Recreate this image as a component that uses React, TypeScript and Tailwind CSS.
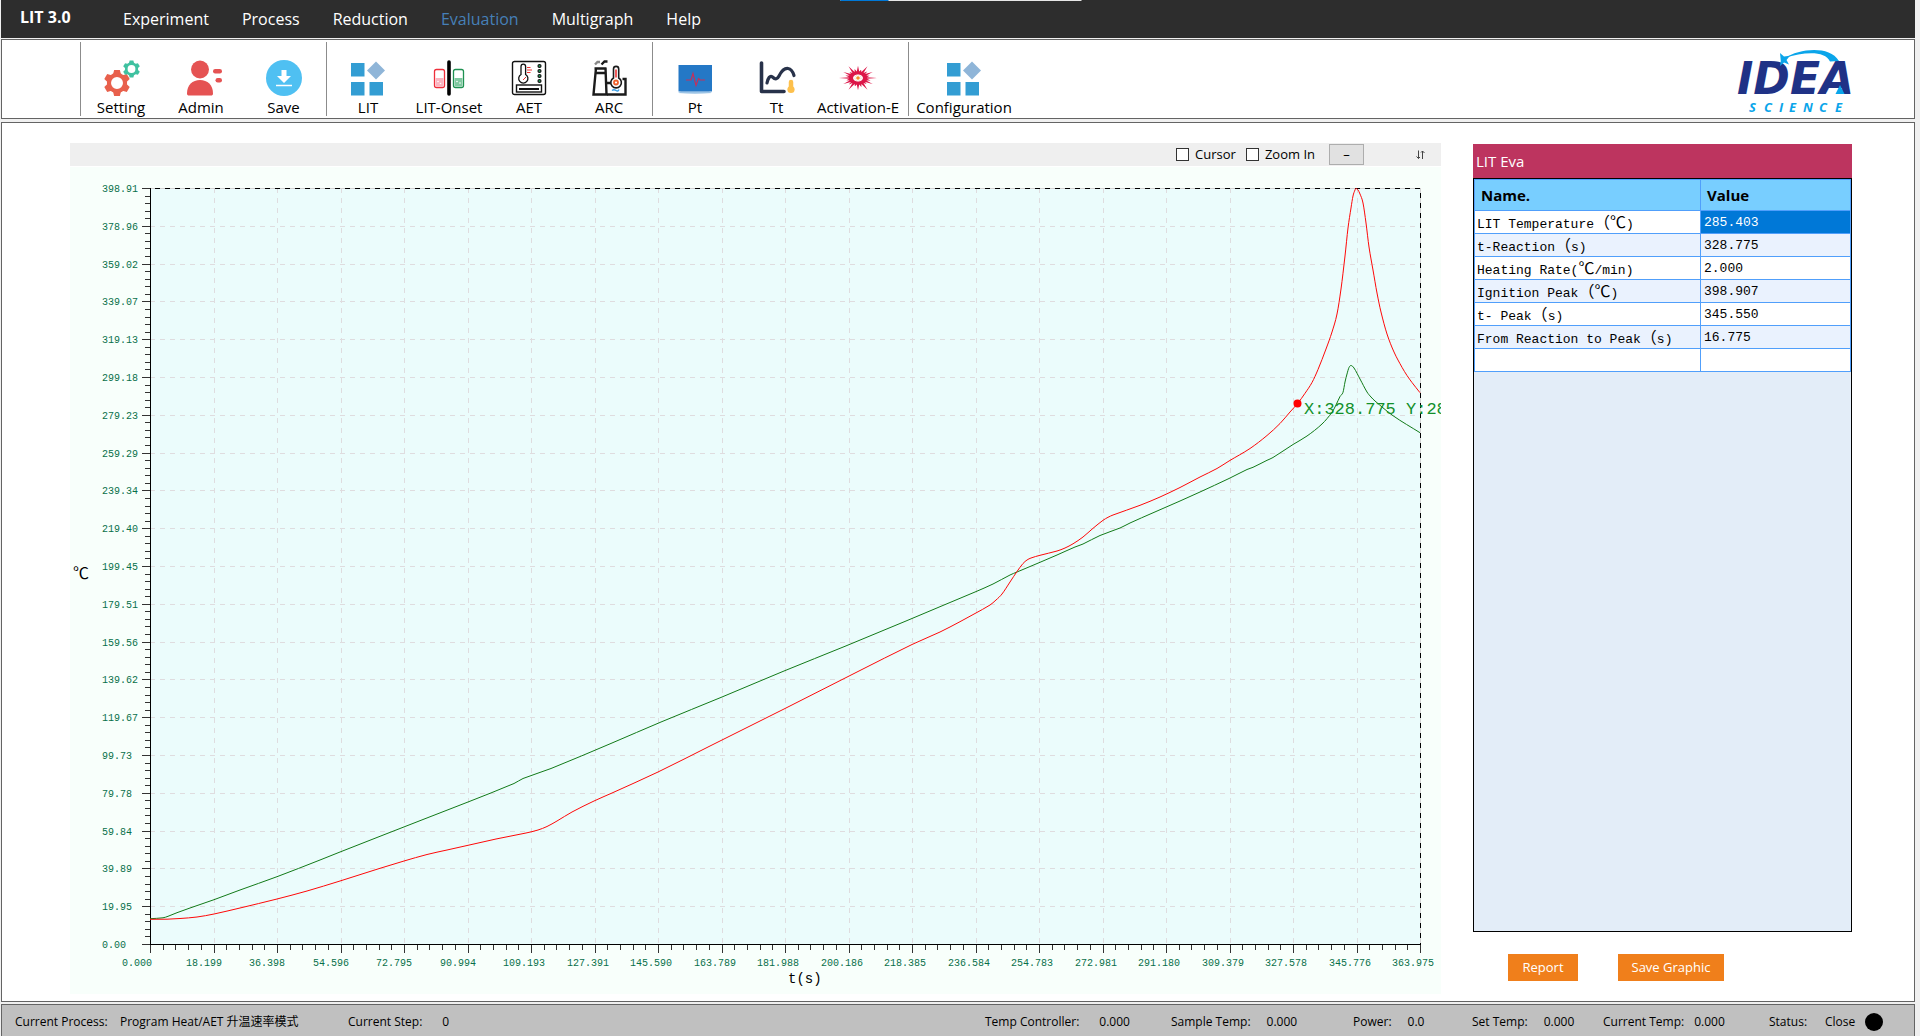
import React, { useState } from 'react';
import clsx from 'clsx';

const MENU = ['Experiment', 'Process', 'Reduction', 'Evaluation', 'Multigraph', 'Help'];

const RESULTS = [
  { name: 'LIT Temperature（℃)', value: '285.403' },
  { name: 't-Reaction（s)', value: '328.775' },
  { name: 'Heating Rate(℃/min)', value: '2.000' },
  { name: 'Ignition Peak（℃)', value: '398.907' },
  { name: 't- Peak（s)', value: '345.550' },
  { name: 'From Reaction to Peak（s)', value: '16.775' },
  { name: '', value: '' },
];

const STATUS = [
  { label: 'Temp Controller:', value: '0.000', layout: 'w-[186px] gap-5' },
  { label: 'Sample Temp:', value: '0.000', layout: 'w-[182px] gap-4' },
  { label: 'Power:', value: '0.0', layout: 'w-[119px] gap-4' },
  { label: 'Set Temp:', value: '0.000', layout: 'w-[131px] gap-4' },
  { label: 'Current Temp:', value: '0.000', layout: 'w-[166px] gap-2.5' },
];

/* ---------- toolbar icons ---------- */

const ICON = 'w-9 h-9 shrink-0 overflow-visible';

const Gear: React.FC<{ cx: number; cy: number; r: number; color: string }> = ({ cx, cy, r, color }) => (
  <g transform={`translate(${cx} ${cy})`}>
    {[0, 60, 120, 180, 240, 300].map(a => (
      <path key={a} transform={`rotate(${a})`} fill={color} d={`M${-r * 0.32} ${-r * 0.6}L${-r * 0.22} ${-r}H${r * 0.22}L${r * 0.32} ${-r * 0.6}z`} />
    ))}
    <circle r={r * 0.62} fill="none" stroke={color} strokeWidth={r * 0.32} />
  </g>
);

const SettingIcon = () => (
  <svg viewBox="-2 0 36 36" className={ICON}>
    <Gear cx={12} cy={23} r={13} color="#e8604c" />
    <Gear cx={26.5} cy={9} r={8.5} color="#3fc1a0" />
  </svg>
);

const AdminIcon = () => (
  <svg viewBox="-4 0 36 36" className={ICON} fill="#e55353">
    <circle cx="13" cy="9.500" r="9" />
    <path d="M0 33.500C0 25 5.500 20 13 20s13 5 13 13.500c0 1.500-.8 2-2 2H2c-1.200 0-2-.5-2-2z" />
    <rect x="26" y="9" width="9" height="4.500" rx="2.200" />
    <rect x="28.500" y="18" width="6.500" height="4.500" rx="2.200" />
  </svg>
);

const SaveIcon = () => (
  <svg viewBox="0 0 36 36" className={ICON}>
    <circle cx="18" cy="18" r="18" fill="#4fc0f2" />
    <path d="M15.500 10h5v6H25l-7 7-7-7h4.500z" fill="#fff" />
    <path d="M10 25.500h16" stroke="#fff" strokeWidth="1.500" />
  </svg>
);

const TilesIcon = () => (
  <svg viewBox="0 0 36 36" className={ICON} fill="#339dd3">
    <rect x="1" y="3" width="13.500" height="13.500" />
    <rect x="1" y="22" width="13.500" height="13.500" />
    <rect x="19.500" y="22" width="13.500" height="13.500" />
    <path d="M26 1.500l9 9-9 9-9-9z" fill="#8fb5d8" />
  </svg>
);

const OnsetIcon = () => (
  <svg viewBox="0 0 36 36" className={ICON}>
    <rect x="3.500" y="9.500" width="10" height="18" rx="2" fill="#fff" stroke="#ee2f3b" strokeWidth="1.300" />
    <path d="M4.500 18h8v8.500h-8z" fill="#fbb4c0" />
    <circle cx="7" cy="21.500" r="0.800" fill="#fff" />
    <circle cx="9.500" cy="23.500" r="0.800" fill="#fff" />
    <path d="M18 2v32" stroke="#000" strokeWidth="3.600" strokeLinecap="round" />
    <rect x="22.500" y="9.500" width="10" height="18" rx="2" fill="#fff" stroke="#1f9152" strokeWidth="1.300" />
    <path d="M23.500 18h8v8.500h-8z" fill="#80c8a0" />
    <circle cx="26" cy="21.500" r="0.800" fill="#fff" />
    <circle cx="29" cy="23" r="0.800" fill="#fff" />
  </svg>
);

const AetIcon = () => (
  <svg viewBox="0 0 36 36" className={ICON} fill="none" stroke="#111">
    <rect x="1.500" y="1.500" width="33" height="33" rx="2" strokeWidth="1.400" />
    <path d="M10 14.500V6.500a2.300 2.300 0 0 1 4.600 0v8a4.600 4.600 0 1 1-4.600 0z" strokeWidth="1.300" />
    <path d="M16 7.500h3.500M16 10h5M16 12.500h3.500M12 20l3-3" stroke="#e33" strokeWidth="1" />
    {[6, 11, 16, 21].map(y => (
      <circle key={y} cx="28.500" cy={y} r="1.500" fill="#1f9152" strokeWidth="1.200" />
    ))}
    <rect x="5.500" y="25" width="25" height="7" strokeWidth="1.400" />
    <path d="M8 29h20" strokeWidth="2" />
  </svg>
);

const ArcIcon = () => (
  <svg viewBox="0 0 36 36" className={ICON} fill="none" stroke="#1b1b1b" strokeWidth="2">
    <path d="M4 4.500l2.500-2.500H9" stroke="#888" strokeWidth="2.400" />
    <path d="M10.500 4.500l3-3h3" strokeWidth="2.400" />
    <path d="M3.500 8.500h12M4.500 13h10.500M5 8L2.500 34.500h13L14.500 8" strokeWidth="2.400" />
    <path d="M16 34.500h18.500V19h-3M16 23h4" strokeWidth="2.400" />
    <path d="M22.500 18V9a2.600 2.600 0 0 1 5.200 0v9a5.300 5.300 0 1 1-5.200 0z" fill="#fff" strokeWidth="1.600" />
    <path d="M25 9.500v8" stroke="#e33" strokeWidth="1.600" />
    <circle cx="25" cy="22.500" r="2" stroke="#f0622d" strokeWidth="1.800" />
    <path d="M21 30.500q2-1.500 4 0t3-1" stroke="#3aa0e8" strokeWidth="1.400" />
  </svg>
);

const PtIcon = () => (
  <svg viewBox="0 0 36 36" className={ICON}>
    <path d="M1 33l3-1.500h28l3 1.500q-17 1.500-34 0z" fill="#9cc4e6" />
    <rect x="1.500" y="5" width="33.500" height="26.500" fill="#2478c6" />
    <path d="M9 20h5l2-6.500 3 12 2.500-7 1.500 1.500h5" fill="none" stroke="#c4305c" strokeWidth="1.200" />
  </svg>
);

const TtIcon = () => (
  <svg viewBox="0 0 36 36" className={ICON} fill="none" stroke="#28324a" strokeLinecap="round" strokeLinejoin="round">
    <path d="M2.500 3v28.500H25" strokeWidth="3.600" />
    <path d="M8 23c1-5 3-8 5.500-6 3 3 5 2 6.500-1 2-4 4.500-8 9-7.500 3.500.5 5 3.500 6 7" strokeWidth="3.200" />
    <path d="M32 22v5" stroke="#fdc04c" strokeWidth="4.500" />
    <circle cx="32" cy="29.500" r="3.600" fill="#fdc04c" stroke="none" />
  </svg>
);

// alternating long and short rays, flattened vertically
const BURST = Array.from({ length: 48 }, (_, i) => {
  const r = i % 2 ? 9 : [19, 13, 17, 12][(i / 2) % 4];
  const a = (i / 48) * Math.PI * 2;
  return `${(18 + r * Math.cos(a)).toFixed(1)},${(18 + r * 0.72 * Math.sin(a)).toFixed(1)}`;
}).join(' ');

const BurstIcon = () => (
  <svg viewBox="0 0 36 36" className={ICON}>
    <polygon points={BURST} fill="#dc1648" />
    <ellipse cx="18" cy="18" rx="5" ry="3.500" fill="#fff" />
    <circle cx="18" cy="18" r="3" fill="none" stroke="#f7c9b0" strokeWidth="1" strokeDasharray="1 1" />
    <circle cx="18" cy="18" r="1.800" fill="#f5902c" />
  </svg>
);

const TOOL_GROUPS = [
  {
    pad: '',
    tools: [
      { label: 'Setting', icon: SettingIcon, width: 'w-20' },
      { label: 'Admin', icon: AdminIcon, width: 'w-20' },
      { label: 'Save', icon: SaveIcon, width: 'w-[85px]' },
    ],
  },
  {
    pad: 'pr-[3px]',
    tools: [
      { label: 'LIT', icon: TilesIcon, width: 'w-[82px]' },
      { label: 'LIT-Onset', icon: OnsetIcon, width: 'w-20' },
      { label: 'AET', icon: AetIcon, width: 'w-20' },
      { label: 'ARC', icon: ArcIcon, width: 'w-20' },
    ],
  },
  {
    pad: 'pr-2',
    tools: [
      { label: 'Pt', icon: PtIcon, width: 'w-[84px]' },
      { label: 'Tt', icon: TtIcon, width: 'w-[79px]' },
      { label: 'Activation-E', icon: BurstIcon, width: 'w-[84px]' },
    ],
  },
  {
    pad: '',
    tools: [{ label: 'Configuration', icon: TilesIcon, width: 'w-[110px]' }],
  },
];

const Logo = () => (
  <svg viewBox="0 0 120 64" className="w-[120px] h-16 overflow-visible" role="img" aria-label="IDEA Science">
    <text x="0" y="43" fill="#1f3286" className="font-['DejaVu_Sans',sans-serif] text-[44px] font-bold italic">IDEA</text>
    <path d="M48 7C62-2 92-6 102 10l-9 .5C88-1 66 1 48 7z" fill="#0aa5ea" />
    <path d="M43 2l4 3.500 6-.8-3.500 4.300 2.500 4.500-5-2-4 3.500.8-5z" fill="#0aa5ea" />
    <path d="M103 34l4.500 9h-9z" fill="#0aa5ea" />
    <text x="12 27 42 52 66 82 98" y="61" fill="#0aa5ea" className="font-['Open_Sans',sans-serif] text-[13px] font-bold italic">SCIENCE</text>
  </svg>
);

/* ---------- chart ---------- */

const LEFT = 150;
const RIGHT = 1420;
const TOP = 188;
const BOTTOM = 944;
const X_MAX = 363.975;
const Y_MAX = 398.907;
const DIVISIONS = 20;

const SAMPLE_CURVE =
  '150,919.3 167,919.2 180,918.5 197,917 214,914 240,908 277,899 307,891 340,881 380,868.3 404,861 427,854.5 447,850 468,845.3 496,839 526,833 538,830 547,826.5 557,821 572,812 594,801 612,793 658,772 710,746 784,709 857,672 912,644.5 940,632 960,621.7 975,613.5 990,605 996,600 1002,594 1010,582 1017,571.5 1023,563.5 1027,560 1031,558 1040,555.3 1057,551 1065,548 1073,543.8 1083,537 1093,528.3 1103,520.3 1108,517.3 1113,515 1140,505.3 1160,497 1180,487.5 1200,477 1217,468.5 1229,461 1250,448.5 1267,435.5 1280,423.5 1290,412 1298,403 1305,393.3 1312,382.5 1318,369.5 1326,349 1332,332 1337,314 1341,289 1345,256 1348,228 1351,208 1353,196 1355,190 1356,188.5 1358,190 1360,194 1363,203 1366,223 1369,247 1373,270 1377,293 1381,312 1387,334 1394,352 1402,367.3 1407,375.5 1412,382.5 1420,392.7';

const REFERENCE_CURVE =
  '150,918.7 163,917.8 168,916.3 177,912.7 190,908 214,899.7 240,890 277,876.7 320,860 340,852 380,836.3 423,819.5 468,802 514,783.5 523,778.5 551,768.5 612,743 661,722 722,697 784,671 845,646.3 906,621 940,606.7 975,592 993,584 1010,575 1017,572 1040,562.3 1057,555 1075,547 1083,544 1100,535.5 1120,528 1130,523 1153,512.8 1180,501 1200,492 1229,478.5 1247,469.5 1253,467.3 1267,460.3 1273,457.5 1293,444.5 1307,436 1322,424 1332,412.3 1336,405 1340,396.5 1343,392.3 1345,382 1347,374 1349,367.5 1351,365.5 1354,368 1360,379 1367,392 1371,397 1375,401 1393,415.7 1420,432.7';

// Catmull-Rom spline through the samples
const smoothPath = (samples: string) => {
  const pts = samples.split(' ').map(p => p.split(',').map(Number));
  const at = (i: number) => pts[Math.min(Math.max(i, 0), pts.length - 1)];
  const slope = (i: number) => {
    const [a, b] = [at(i - 1), at(i + 1)];
    return (b[1] - a[1]) / (b[0] - a[0]);
  };
  return pts.slice(1).reduce((d, p, i) => {
    const b = pts[i];
    const reach = (p[0] - b[0]) / 3;
    return `${d}C${b[0] + reach} ${b[1] + slope(i) * reach} ${p[0] - reach} ${p[1] - slope(i + 1) * reach} ${p[0]} ${p[1]}`;
  }, `M${pts[0][0]} ${pts[0][1]}`);
};

const steps = Array.from({ length: DIVISIONS + 1 }, (_, i) => i);
const minorSteps = Array.from({ length: DIVISIONS * 5 + 1 }, (_, i) => i);
const xAt = (ratio: number) => Math.round(LEFT + (RIGHT - LEFT) * ratio) + 0.5;
const yAt = (ratio: number) => Math.round(BOTTOM - (BOTTOM - TOP) * ratio) + 0.5;

const Chart: React.FC = () => (
  <svg viewBox="70 167 1371 827" className="block w-full bg-[#f8fffb] font-['Liberation_Mono',monospace]">
    <rect x={LEFT} y={TOP} width={RIGHT - LEFT} height={BOTTOM - TOP} fill="#ebfcfc" />

    <g stroke="#dfdcdf" strokeDasharray="5 5" shapeRendering="crispEdges">
      {steps.map(i => (
        <path key={i} d={`M${LEFT} ${yAt(i / DIVISIONS)}H${RIGHT}M${xAt(i / DIVISIONS)} ${TOP}V${BOTTOM}`} />
      ))}
    </g>
    <g fill="none" shapeRendering="crispEdges">
      <path d={`M${LEFT} ${TOP + 0.5}H${RIGHT + 0.5}V${BOTTOM}`} stroke="#d4d4d4" />
      <path d={`M${LEFT + 5} ${TOP + 0.5}H${RIGHT + 0.5}V${BOTTOM}`} stroke="#000" strokeDasharray="5 5" />
      <path d={`M${LEFT + 0.5} ${TOP}V${BOTTOM + 0.5}H${RIGHT + 1}`} stroke="#000" />
    </g>

    <g stroke="#333" shapeRendering="crispEdges">
      {minorSteps.map(i => {
        const size = i % 5 ? 5 : 8;
        const ratio = i / (DIVISIONS * 5);
        return <path key={i} d={`M${LEFT} ${yAt(ratio)}h${-size}M${xAt(ratio)} ${BOTTOM + 1}v${size}`} />;
      })}
    </g>

    <g fill="#08704a" className="text-[10px]">
      {steps.map(i => (
        <React.Fragment key={i}>
          <text x="102" y={yAt(i / DIVISIONS) + 3.5}>{((Y_MAX * i) / DIVISIONS).toFixed(2)}</text>
          <text x={xAt(i / DIVISIONS) - 28.5} y="966">{((X_MAX * i) / DIVISIONS + 1e-6).toFixed(3)}</text>
        </React.Fragment>
      ))}
    </g>

    <g fill="none">
      <path d={smoothPath(REFERENCE_CURVE)} stroke="#127a18" />
      <path d={smoothPath(SAMPLE_CURVE)} stroke="#ff0808" />
    </g>
    <circle cx="1297.500" cy="403.500" r="4" fill="#f00" />
    <text x="1304" y="414" fill="#12902a" className="text-[17px]">X:328.775 Y:285.403</text>

    <text x="73" y="579" className="font-['Noto_Sans_CJK_SC',sans-serif] text-base">℃</text>
    <text x="788" y="983" className="text-[14px]">t(s)</text>
  </svg>
);

/* ---------- right panel ---------- */

// full-width characters sit in a 16px cell, the latin ones in a half of it
const CellText: React.FC<{ text: string }> = ({ text }) => (
  <>
    {text.split(/([（℃]+)/).map((part, i) =>
      i % 2 ? <span key={i} className="font-['Noto_Sans_CJK_SC',sans-serif] text-base leading-none">{part}</span> : part
    )}
  </>
);

const EvaluationPanel: React.FC = () => (
  <aside className="mt-px flex w-[379px] shrink-0 flex-col">
    <h2 className="flex h-[34px] items-center bg-[#bd345f] px-[3px] text-[15px] text-white">LIT Eva</h2>
    <div className="flex-1 border border-black bg-[#e3edf8]">
      <table className="w-full table-fixed border-collapse text-left [&_td]:border [&_td]:border-[#509ffb] [&_th]:border [&_th]:border-[#509ffb]">
        <thead className="bg-[#78ceff] text-[15px]">
          <tr className="h-[31px]">
            <th className="w-[226px] px-1.5 py-0 font-bold">Name.</th>
            <th className="px-1.5 py-0 font-bold">Value</th>
          </tr>
        </thead>
        <tbody className="font-['Liberation_Mono',monospace] text-[13px] leading-4">
          {RESULTS.map((row, i) => (
            <tr key={i} className={clsx('h-[23px]', i % 2 ? 'bg-[#eaf2fe]' : 'bg-white')}>
              <td className="whitespace-nowrap px-0.5 pt-0.5 pb-0"><CellText text={row.name} /></td>
              <td className={clsx('px-[3px] pt-0.5 pb-0', i === 0 && 'bg-[#0078d7] text-white')}>{row.value}</td>
            </tr>
          ))}
        </tbody>
      </table>
    </div>
    <div className="mt-[22px] mb-[13px] flex gap-10 px-[35px] text-[13px] text-white">
      <button className="h-[27px] w-[70px] bg-[#f07f1b]">Report</button>
      <button className="h-[27px] w-[106px] bg-[#f07f1b]">Save Graphic</button>
    </div>
  </aside>
);

export default function App() {
  const [active, setActive] = useState('Evaluation');
  const [cursor, setCursor] = useState(false);
  const [zoom, setZoom] = useState(false);

  const box = 'h-[13px] w-[13px] appearance-none border border-[#333] bg-white checked:bg-[#333]';

  return (
    <div className="flex min-h-screen flex-col bg-[#f0f0f0] pl-px pr-[5px] font-['Open_Sans','Noto_Sans_CJK_SC',sans-serif] text-black">
      <header className="relative flex h-[38px] items-center bg-[#2d2d2d] text-white">
        <h1 className="w-[106px] pl-[19px] pb-1 text-base font-bold">LIT 3.0</h1>
        <nav className="flex gap-px text-base">
          {MENU.map(item => (
            <button
              key={item}
              onClick={() => setActive(item)}
              className={clsx('px-4', item === active && 'text-[#4680b8]')}
            >
              {item}
            </button>
          ))}
        </nav>
        <div className="absolute left-1/2 top-0 ml-[3px] flex h-px w-[241px] -translate-x-1/2 bg-[#e6e6e6]">
          <div className="w-12 bg-[#0078d7]" />
        </div>
      </header>

      <div className="mt-px flex h-20 items-stretch border border-[#646464] bg-white pl-[78px]">
        {TOOL_GROUPS.map(({ pad, tools }, i) => (
          <div key={i} className={clsx('my-0.5 flex border-l border-[#8c8c8c]', pad)}>
            {tools.map(({ label, icon: Icon, width }) => (
              <button key={label} className={clsx('flex flex-col items-center pt-[18px]', width)}>
                <Icon />
                <span className="mt-[3px] whitespace-nowrap text-[15px] leading-4">{label}</span>
              </button>
            ))}
          </div>
        ))}
        <div className="ml-auto mr-[57px] pt-[11px]">
          <Logo />
        </div>
      </div>

      <main className="mt-[3px] flex flex-1 gap-8 border border-[#646464] bg-white pl-[68px] pr-[62px] pt-5 pb-[7px]">
        <section className="min-w-0 flex-1">
          <div className="mb-px flex h-[23px] items-center bg-[#efefef] text-[13px]">
            <label className="ml-auto flex items-center gap-1.5">
              <input type="checkbox" className={box} checked={cursor} onChange={e => setCursor(e.target.checked)} />
              Cursor
            </label>
            <label className="ml-2.5 flex items-center gap-1.5">
              <input type="checkbox" className={box} checked={zoom} onChange={e => setZoom(e.target.checked)} />
              Zoom In
            </label>
            <button className="ml-3.5 flex h-[21px] w-[35px] items-center justify-center border border-[#adadad] bg-[#e1e1e1]">–</button>
            <button className="ml-[52px] mr-4" aria-label="Swap axes">
              <svg viewBox="0 0 9 10" className="h-2.5 w-[9px]" fill="none" stroke="#444">
                <path d="M2.500 0.500v8M0.500 6.500l2 2 1.500-1.500M6.500 9V1M5 2.500l1.500-1.500 2 2" />
              </svg>
            </button>
          </div>
          <Chart />
        </section>
        <EvaluationPanel />
      </main>

      <footer className="mt-0.5 flex h-8 items-center border border-b-0 border-[#646464] bg-[#c0c0c0] pl-[13px] pt-0.5 text-xs">
        <span className="w-[105px]">Current Process:</span>
        <span className="w-[228px]">Program Heat/AET 升温速率模式</span>
        <span className="flex gap-5">
          <span>Current Step:</span>
          <span>0</span>
        </span>
        <div className="ml-auto flex">
          {STATUS.map(({ label, value, layout }) => (
            <div key={label} className={clsx('flex', layout)}>
              <span>{label}</span>
              <span>{value}</span>
            </div>
          ))}
        </div>
        <div className="flex items-center pr-[31px]">
          <span className="w-14">Status:</span>
          <span className="w-8">Close</span>
          <span className="ml-2 h-[18px] w-[18px] rounded-full bg-black" />
        </div>
      </footer>
    </div>
  );
}
